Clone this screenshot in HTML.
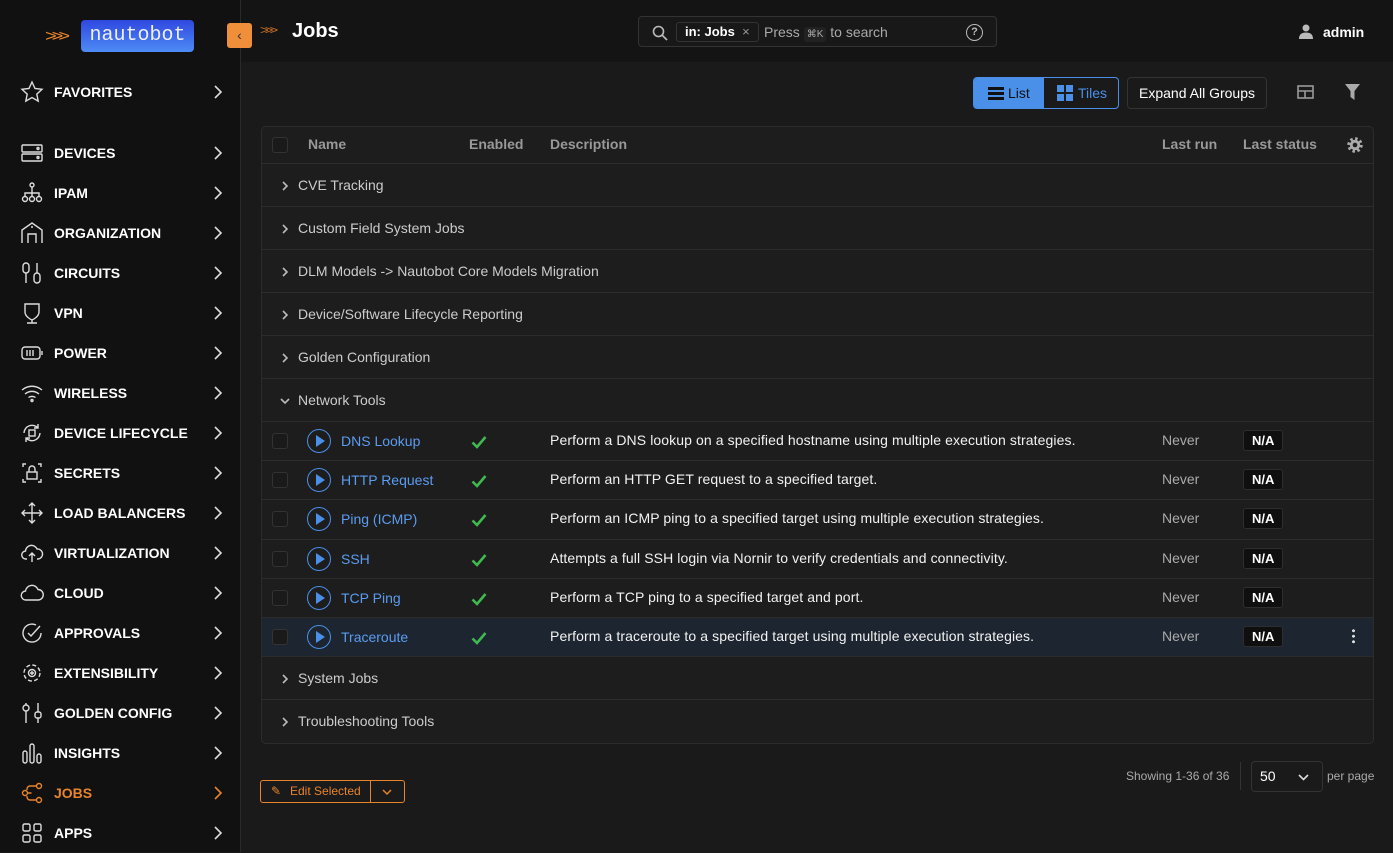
<!DOCTYPE html>
<html><head><style>
*{box-sizing:border-box;margin:0;padding:0}
body{width:1393px;height:852px;background:#1a1a1a;font-family:"Liberation Sans",sans-serif;color:#eee;position:relative;overflow:hidden;font-size:14px}
.side{position:absolute;left:0;top:0;width:241px;height:852px;background:#111;border-right:1px solid #2a2a2a}
.top{position:absolute;left:241px;top:0;right:0;height:62px;background:#141414}
.nav{position:absolute;left:0;width:240px;height:40px;display:flex;align-items:center;font-weight:bold;font-size:14px;color:#fff}
.nav svg.i{position:absolute;left:20px;width:24px;height:24px;fill:none;stroke:#ddd;stroke-width:1.4}
.nav span{position:absolute;left:54px}
.nav .ch{position:absolute;left:212px;width:12px;height:14px;fill:none;stroke:#ddd;stroke-width:1.6}
.tbl{position:absolute;left:261px;top:126px;width:1113px;height:618px;background:#1d1d1d;border:1px solid #2c2c2c;border-radius:5px;overflow:hidden}
.row{position:absolute;left:0;width:100%;border-top:1px solid #2c2c2c}
.g{color:#ccc;font-size:14px}
.g svg{position:absolute;left:18px;width:10px;height:10px;fill:none;stroke:#bbb;stroke-width:1.6}
.g span{position:absolute;left:36px}
.cb{position:absolute;left:10px;width:16px;height:16px;border:1px solid #333;border-radius:3px;background:#1a1a1a}
.play{position:absolute;left:45px;width:24px;height:24px;border:1.5px solid #4a8fe8;border-radius:50%}
.play:after{content:"";position:absolute;left:8px;top:5px;border-left:9px solid #4a8fe8;border-top:6px solid transparent;border-bottom:6px solid transparent}
.nm{position:absolute;left:79px;color:#5b9cf0}
.ok{position:absolute;left:209px;width:16px;height:14px;fill:none;stroke:#3fb950;stroke-width:2.6}
.ds{position:absolute;left:288px;color:#f2f2f2;letter-spacing:0.1px}
.nv{position:absolute;left:900px;color:#aaa}
.na{position:absolute;left:981px;background:#0f0f0f;border:1px solid #2e2e2e;border-radius:3px;font-size:13px;font-weight:bold;padding:2px 8px;color:#fff}
.th{position:absolute;color:#999;font-weight:bold;font-size:14px;top:9px}
</style></head><body>
<div class="side">
 <div style="position:absolute;left:45px;top:25px;color:#e8842c;font-size:20px;letter-spacing:-5px;transform:scaleY(0.8)">&gt;&gt;&gt;</div>
 <div style="position:absolute;left:81px;top:20px;width:113px;height:32px;border-radius:4px;background:linear-gradient(#2f48e0,#4d8cf5);font-family:'Liberation Mono',monospace;font-size:20px;color:#eef;text-align:center;line-height:32px">nautobot</div>
</div>
<div class="top">
 <div style="position:absolute;left:-14px;top:23px;width:25px;height:25px;background:#ef8f3a;border-radius:3px;color:#333;font-size:14px;text-align:center;line-height:25px">‹</div>
 <div style="position:absolute;left:19px;top:22px;color:#c66d20;font-size:15px;letter-spacing:-4px;transform:scaleY(0.8)">&gt;&gt;&gt;</div>
 <div style="position:absolute;left:51px;top:20px;font-size:20px;font-weight:bold;color:#fff">Jobs</div>
 <div style="position:absolute;left:397px;top:16px;width:359px;height:31px;border:1px solid #333;border-radius:4px;background:#181818">
  <svg style="position:absolute;left:13px;top:8px" width="16" height="16" fill="none" stroke="#bbb" stroke-width="1.6"><circle cx="6.5" cy="6.5" r="5"/><path d="M10 10l5 5"/></svg>
  <div style="position:absolute;left:37px;top:5px;height:20px;border:1px solid #333;border-radius:3px;padding:0 8px;font-size:13px;line-height:18px;color:#fff;font-weight:bold">in: Jobs <span style="color:#999;font-weight:normal">&nbsp;×</span></div>
  <div style="position:absolute;left:125px;top:7px;color:#aaa;font-size:14px">Press <span style="background:#222;font-size:10px;padding:2px 3px;border-radius:3px">⌘K</span> to search</div>
  <div style="position:absolute;left:327px;top:7px;width:17px;height:17px;border:1.5px solid #bbb;border-radius:50%;color:#bbb;font-size:11px;text-align:center;line-height:14px;font-weight:bold">?</div>
 </div>
 <svg style="position:absolute;left:1058px;top:24px" width="14" height="15" fill="#bbb"><circle cx="7" cy="4" r="3.5"/><path d="M0 15c0-5 3-6.5 7-6.5s7 1.5 7 6.5z"/></svg>
 <div style="position:absolute;left:1082px;top:24px;font-weight:bold;font-size:14px;color:#fff">admin</div>
</div>

<div id="nav"></div>

<div style="position:absolute;left:973px;top:77px;width:146px;height:32px;border:1px solid #4a8fe8;border-radius:4px;overflow:hidden">
 <div style="position:absolute;left:0;top:0;width:70px;height:32px;background:#4a8fe8"></div>
 <svg style="position:absolute;left:14px;top:9px" width="16" height="13" fill="#111"><rect y="0" width="16" height="3"/><rect y="5" width="16" height="3"/><rect y="10" width="16" height="3"/></svg>
 <div style="position:absolute;left:34px;top:7px;color:#111;font-size:14px">List</div>
 <div style="position:absolute;left:83px;top:7px;width:16px;height:16px;background:linear-gradient(90deg,transparent 7px,#1a1a1a 7px,#1a1a1a 9px,transparent 9px),linear-gradient(transparent 7px,#1a1a1a 7px,#1a1a1a 9px,transparent 9px),#4a8fe8"></div>
 <div style="position:absolute;left:104px;top:7px;color:#4a8fe8;font-size:14px">Tiles</div>
</div>
<div style="position:absolute;left:1127px;top:77px;width:140px;height:32px;border:1px solid #333;border-radius:4px;color:#fff;font-size:14px;text-align:center;line-height:30px">Expand All Groups</div>
<svg style="position:absolute;left:1297px;top:85px" width="17" height="14" fill="none" stroke="#999" stroke-width="1.6"><rect x="1" y="1" width="15" height="12"/><path d="M1 6h15M8 6v7"/></svg>
<svg style="position:absolute;left:1345px;top:84px" width="15" height="16" fill="#aaa"><path d="M0 0h15l-5.5 7v9l-4-3v-6z"/></svg>

<div class="tbl">
 <div style="position:absolute;left:0;top:0;width:100%;height:36px">
  <div class="cb" style="top:10px"></div>
  <div class="th" style="left:46px">Name</div><div class="th" style="left:207px">Enabled</div><div class="th" style="left:288px">Description</div>
  <div class="th" style="left:900px">Last run</div><div class="th" style="left:981px">Last status</div>
  <svg style="position:absolute;left:1084px;top:9px" width="18" height="18" viewBox="0 0 18 18"><circle cx="9" cy="9" r="6" fill="none" stroke="#aaa" stroke-width="3.5" stroke-dasharray="2.4 2.3"/><circle cx="9" cy="9" r="5.2" fill="#aaa"/><circle cx="9" cy="9" r="2.3" fill="#1d1d1d"/></svg>
 </div>
 <div id="rows"></div>
</div>

<div style="position:absolute;left:260px;top:780px;width:145px;height:23px;border:1px solid #e8842c;border-radius:3px;color:#e8842c;font-size:12px;line-height:21px">
 <span style="position:absolute;left:10px">✎</span><span style="position:absolute;left:29px">Edit Selected</span>
 <div style="position:absolute;left:109px;top:0;width:1px;height:21px;background:#e8842c"></div>
 <svg style="position:absolute;left:121px;top:8px" width="10" height="7" fill="none" stroke="#e8842c" stroke-width="1.5"><path d="M1 1l4 4 4-4"/></svg>
</div>
<div style="position:absolute;left:1126px;top:769px;color:#aaa;font-size:12px">Showing 1-36 of 36</div>
<div style="position:absolute;left:1240px;top:762px;width:1px;height:28px;background:#333"></div>
<div style="position:absolute;left:1251px;top:761px;width:72px;height:31px;border:1px solid #333;border-radius:4px;color:#fff;font-size:14px;padding:6px 0 0 8px">50
 <svg style="position:absolute;left:46px;top:12px" width="11" height="7" fill="none" stroke="#ddd" stroke-width="1.6"><path d="M1 1l4.5 4.5L10 1"/></svg></div>
<div style="position:absolute;left:1327px;top:769px;color:#aaa;font-size:12px">per page</div>

<script>
const icons={
FAVORITES:'<path d="M12 2l3 6.5 7 .8-5.2 4.8 1.4 7-6.2-3.6-6.2 3.6 1.4-7L2 9.3l7-.8z"/>',
DEVICES:'<rect x="2" y="4" width="20" height="7" rx="1"/><rect x="2" y="13" width="20" height="7" rx="1"/><circle cx="18" cy="7.5" r="1"/><circle cx="18" cy="16.5" r="1"/>',
IPAM:'<circle cx="12" cy="4" r="2"/><path d="M12 6v5M5 15v-3h14v3M12 11v4"/><circle cx="5" cy="18" r="2.5"/><circle cx="12" cy="18" r="2.5"/><circle cx="19" cy="18" r="2.5"/>',
ORGANIZATION:'<path d="M2 22V9l10-7 10 7v13M8 22v-9h8v9M11 6h2"/>',
CIRCUITS:'<rect x="3" y="2" width="6" height="10" rx="3"/><rect x="14" y="12" width="6" height="10" rx="3"/><path d="M6 12v10M17 2v10"/>',
VPN:'<path d="M5 3h14v8c0 5-7 8-7 8s-7-3-7-8z M12 19v3M7 22h10"/>',
POWER:'<rect x="2" y="6" width="18" height="12" rx="3"/><path d="M22 10v4M7 9v6M10 9v6M13 9v6"/>',
WIRELESS:'<path d="M2 9c6-5 14-5 20 0M5 13c4-3.5 10-3.5 14 0M8.5 16.5c2-1.5 5-1.5 7 0"/><circle cx="12" cy="19.5" r="1"/>',
'DEVICE LIFECYCLE':'<path d="M4 12a8 8 0 0114-5M20 12a8 8 0 01-14 5M18 3v4h-4M6 21v-4h4"/><rect x="9" y="9" width="6" height="6"/>',
SECRETS:'<path d="M6 3H3v3M18 3h3v3M6 21H3v-3M18 21h3v-3"/><rect x="7" y="11" width="10" height="7"/><path d="M9 11V8a3 3 0 016 0v3"/>',
'LOAD BALANCERS':'<path d="M12 2v20M2 12h20M9 5l3-3 3 3M9 19l3 3 3-3M5 9l-3 3 3 3M19 9l3 3-3 3"/>',
VIRTUALIZATION:'<path d="M7 18H6a4 4 0 01-.5-8A6 6 0 0117 8a5 5 0 011 10h-1M12 21v-9M9 15l3-3 3 3"/>',
CLOUD:'<path d="M7 19H6a4.5 4.5 0 01-.5-9A6.5 6.5 0 0118 8.5a5 5 0 010 10.5z"/>',
APPROVALS:'<path d="M21 12a9 9 0 11-5-8M8 12l3 3 9-10"/>',
EXTENSIBILITY:'<circle cx="12" cy="12" r="3.5"/><circle cx="12" cy="12" r="8" stroke-dasharray="4 2.3"/><path d="M12 10v4M10 12h4"/>',
'GOLDEN CONFIG':'<circle cx="6" cy="7" r="3"/><rect x="15" y="11" width="6" height="6" rx="2"/><path d="M6 2v2M6 10v12M18 2v9M18 17v5"/>',
INSIGHTS:'<rect x="3" y="10" width="4" height="12" rx="2"/><rect x="10" y="3" width="4" height="19" rx="2"/><rect x="17" y="13" width="4" height="9" rx="2"/>',
JOBS:'<circle cx="5" cy="12" r="2.5"/><circle cx="19" cy="5" r="2.5"/><circle cx="19" cy="19" r="2.5"/><path d="M16.5 5H10a3 3 0 00-3 3v1M16.5 19H10a3 3 0 01-3-3v-1M7.5 12h4"/>',
APPS:'<rect x="3" y="3" width="7" height="7" rx="1.5"/><rect x="14" y="3" width="7" height="7" rx="1.5"/><rect x="3" y="14" width="7" height="7" rx="1.5"/><rect x="14" y="14" width="7" height="7" rx="1.5"/>'};
let h='',names=Object.keys(icons);
names.forEach((n,i)=>{let y=i==0?72:133+(i-1)*40;let c=n=='JOBS'?' style="color:#e8842c"':'';let st=n=='JOBS'?' style="stroke:#e8842c"':'';
h+=`<div class="nav" style="top:${y}px"><svg class="i" viewBox="0 0 24 24"${st}>${icons[n]}</svg><span${c}>${n}</span><svg class="ch" viewBox="0 0 12 14"${st}><path d="M3 1l6 6-6 6"/></svg></div>`});
document.getElementById('nav').innerHTML=h;
let r='';const grp=(t,top,hgt,open)=>`<div class="row g" style="top:${top}px;height:${hgt}px"><svg style="top:${hgt/2-5}px" viewBox="0 0 10 10"><path d="${open?'M1 3l4 4 4-4':'M3 1l4 4-4 4'}"/></svg><span style="top:${hgt/2-9}px">${t}</span></div>`;
const G=['CVE Tracking','Custom Field System Jobs','DLM Models -&gt; Nautobot Core Models Migration','Device/Software Lifecycle Reporting','Golden Configuration'];
G.forEach((t,i)=>r+=grp(t,36+i*43,43,0));
r+=grp('Network Tools',251,43,1);
const J=[['DNS Lookup','Perform a DNS lookup on a specified hostname using multiple execution strategies.'],['HTTP Request','Perform an HTTP GET request to a specified target.'],['Ping (ICMP)','Perform an ICMP ping to a specified target using multiple execution strategies.'],['SSH','Attempts a full SSH login via Nornir to verify credentials and connectivity.'],['TCP Ping','Perform a TCP ping to a specified target and port.'],['Traceroute','Perform a traceroute to a specified target using multiple execution strategies.']];
J.forEach((j,i)=>{let t=294+i*39.2;let bg=i==5?'background:#1d2530;':'';
r+=`<div class="row" style="top:${t}px;height:39px;${bg}"><div class="cb" style="top:11px"></div><div class="play" style="top:7px"></div><div class="nm" style="top:11px">${j[0]}</div><svg class="ok" style="top:13px" viewBox="0 0 16 14"><path d="M1.5 7.5l4.5 4.5 8.5-10"/></svg><div class="ds" style="top:10px">${j[1]}</div><div class="nv" style="top:10px">Never</div><div class="na" style="top:8px">N/A</div>${i==5?'<div style="position:absolute;left:1090px;top:10px;width:3px;height:16px;background:radial-gradient(circle,#ddd 1.4px,transparent 1.6px) 0 0/3px 5.5px"></div>':''}</div>`});
r+=grp('System Jobs',529,43,0);r+=grp('Troubleshooting Tools',572,44,0);
document.getElementById('rows').innerHTML=r;
</script>
</body></html>
